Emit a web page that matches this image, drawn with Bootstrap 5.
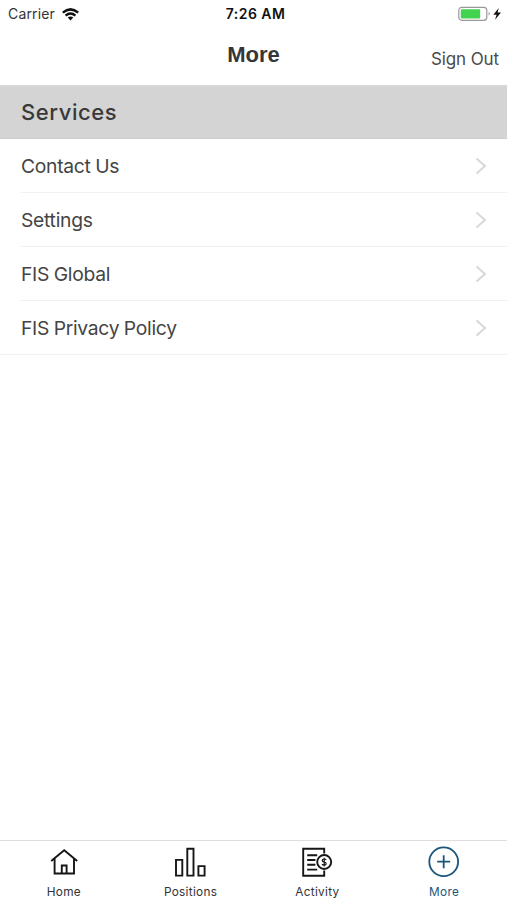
<!DOCTYPE html>
<html lang="en">
<head>
<meta charset="utf-8">
<meta name="viewport" content="width=device-width, initial-scale=1">
<title>More</title>
<link href="https://cdn.jsdelivr.net/npm/bootstrap@5.3.0/dist/css/bootstrap.min.css" rel="stylesheet">
<style>
  body { font-family: Inter, "Liberation Sans", sans-serif; color: #404040; background: #fff; }
  svg { display: block; fill: none; flex: none; }
  .status-bar { height: 28px; padding: 0 6px 0 8px; color: #111; font-size: 14px; line-height: 28px; }
  .carrier { letter-spacing: .15px; color: #333; margin-right: 7px; }
  .clock { font-weight: 600; font-size: 14px; letter-spacing: .45px; padding-left: 2px; }
  .title-bar { height: 56.5px; padding: 0 8px; }
  .page-title { font: bold 22px/54px "Liberation Sans", Arial, sans-serif; color: #363636; }
  .sign-out { font-size: 17px; line-height: 62px; letter-spacing: -.1px; color: #4b4b4b; }
  .section-title { height: 54.5px; padding-left: 21px; background: #d4d4d4; border-top: 1px solid #dadada; border-bottom: 1px solid #cdcdcd; font-size: 22px; line-height: 53px; font-weight: 500; letter-spacing: .58px; color: #393939; }
  .menu-row { height: 53.9px; margin-left: 21px; padding: 2px 20px 0 0; border: 0; border-bottom: 1px solid #f1f1f1; font-size: 19.3px; line-height: 50px; letter-spacing: -.28px; word-spacing: -.6px; color: #444; }
  .list-group-flush > .menu-row:last-child { margin-left: 0; padding-left: 21px; border-bottom-width: 1px; }
  .tab-bar { height: 60px; border-top: 1px solid #dedede; }
  .tab-link { padding: 5px 0 0 1px; color: #161616; font-size: 11.8px; line-height: 18px; letter-spacing: .3px; }
  .tab-link span { margin-top: 4.5px; color: #333; }
  .tab-link.active, .tab-link.active span { color: #1c567d; }
</style>
<script src="https://cdn.jsdelivr.net/npm/bootstrap@5.3.0/dist/js/bootstrap.bundle.min.js"></script>
</head>
<body>
<div class="d-flex flex-column vh-100 overflow-hidden">
  <div class="status-bar row g-0 flex-shrink-0">
    <div class="col d-flex align-items-center">
      <span class="carrier">Carrier</span>
      <svg width="17" height="13" viewBox="0 0 17 13"><g stroke="#111" stroke-width="2.5"><path d="M.8 4.600Q8.500-1.900 16.200 4.600M3.600 7.600Q8.500 3.400 13.400 7.600"/></g><path fill="#111" d="M5.700 9.600Q8.500 7.200 11.300 9.600L8.500 12.500Z"/></svg>
    </div>
    <div class="col-auto clock">7:26 AM</div>
    <div class="col d-flex align-items-center justify-content-end">
      <svg width="43" height="16" viewBox="0 0 43 16"><rect x=".8" y="1.3" width="28" height="13" rx="3" stroke="#999" stroke-width="1.2"/><rect x="2.8" y="3.2" width="19.4" height="9.2" rx=".8" fill="#42d451"/><path d="M30.700 5.800q2 2 0 4Z" fill="#888"/><path d="M40.700 2 35.400 8.700h3.200L37 13.700l6-7.200h-3.400Z" fill="#111"/></svg>
    </div>
  </div>
  <header class="title-bar row g-0 flex-shrink-0">
    <div class="col"></div>
    <h1 class="page-title col-auto mb-0">More</h1>
    <div class="col text-end"><a class="sign-out text-decoration-none" href="#">Sign Out</a></div>
  </header>
  <main class="flex-grow-1">
    <h2 class="section-title mb-0">Services</h2>
    <div class="list-group list-group-flush">
      <a href="#" class="menu-row list-group-item d-flex justify-content-between align-items-center"><span>Contact Us</span><svg width="12" height="18" viewBox="0 0 12 18"><path d="m1.500 1.500 8.500 7.500-8.500 7.500" stroke="#d8d8d8" stroke-width="2"/></svg></a>
      <a href="#" class="menu-row list-group-item d-flex justify-content-between align-items-center"><span>Settings</span><svg width="12" height="18" viewBox="0 0 12 18"><path d="m1.500 1.500 8.500 7.500-8.500 7.500" stroke="#d8d8d8" stroke-width="2"/></svg></a>
      <a href="#" class="menu-row list-group-item d-flex justify-content-between align-items-center"><span>FIS Global</span><svg width="12" height="18" viewBox="0 0 12 18"><path d="m1.500 1.500 8.500 7.500-8.500 7.500" stroke="#d8d8d8" stroke-width="2"/></svg></a>
      <a href="#" class="menu-row list-group-item d-flex justify-content-between align-items-center"><span>FIS Privacy Policy</span><svg width="12" height="18" viewBox="0 0 12 18"><path d="m1.500 1.500 8.500 7.500-8.500 7.500" stroke="#d8d8d8" stroke-width="2"/></svg></a>
    </div>
  </main>
  <nav class="tab-bar nav nav-fill row g-0 flex-shrink-0">
    <a href="#" class="tab-link nav-link col-3 d-flex flex-column align-items-center"><svg width="32" height="32" viewBox="0 0 32 32" stroke="currentColor" stroke-width="1.9"><path d="M3.200 15 16.200 4.300 29.200 15M6.600 12.500v15h19.400v-15M13.800 27.500v-8h4.800v8"/></svg><span>Home</span></a>
    <a href="#" class="tab-link nav-link col-3 d-flex flex-column align-items-center"><svg width="32" height="32" viewBox="0 0 32 32" stroke="currentColor" stroke-width="1.9"><path d="M1 13.900h6.300v15.700H1ZM12.300 2.700h6.200v26.900h-6.200ZM23.400 20.100h6.200v9.500h-6.200Z"/></svg><span>Positions</span></a>
    <a href="#" class="tab-link nav-link col-3 d-flex flex-column align-items-center"><svg width="32" height="32" viewBox="0 0 32 32" stroke="currentColor" stroke-width="1.9"><path d="M23.200 7.500V2.800H2.200v27h21v-5.200M6.200 9.200h10M6.200 14h8.200M6.200 18.800h8.200M6.200 23.600h10"/><circle cx="23.200" cy="16" r="7"/><path stroke-width="1.2" d="M25.200 14q-.6-1-2-1-2 0-2 1.400 0 1.200 2 1.600t2 1.700q0 1.400-2 1.400-1.500 0-2.200-1M23.200 11.700v8.700"/></svg><span>Activity</span></a>
    <a href="#" class="tab-link nav-link active col-3 d-flex flex-column align-items-center"><svg width="32" height="32" viewBox="0 0 32 32" stroke="currentColor" stroke-width="1.8"><circle cx="15.700" cy="15.700" r="14.400"/><path d="M9.200 15.700h13M15.700 9.200v13"/></svg><span>More</span></a>
  </nav>
</div>
</body>
</html>
